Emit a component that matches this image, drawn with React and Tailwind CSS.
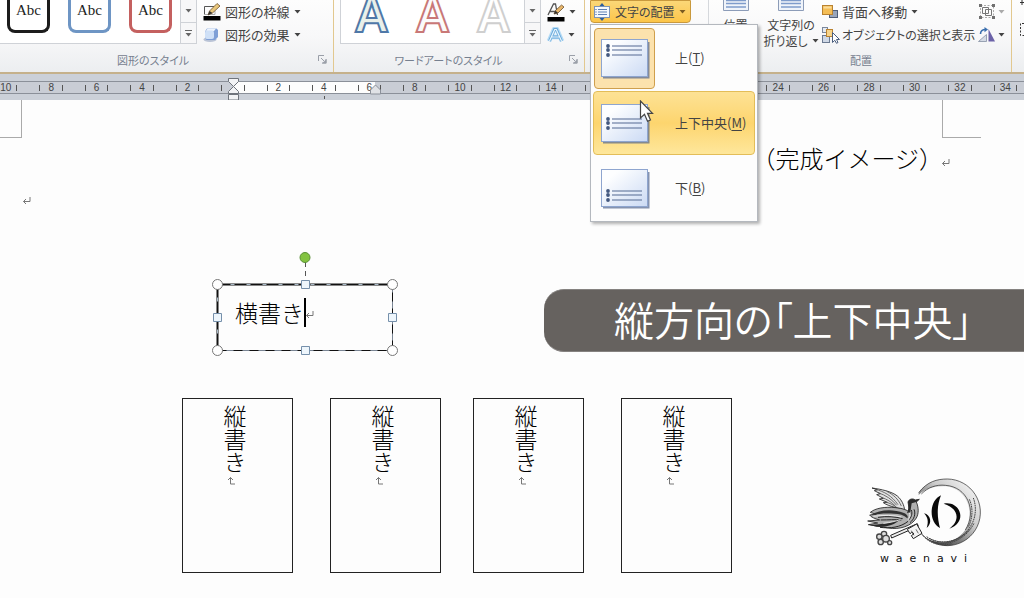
import { useState } from "react";
import clsx from "clsx";

const shapeStyles = [
  { name: "black", border: "border-[#1c1c1c]" },
  { name: "blue", border: "border-[#6e95c4]" },
  { name: "red", border: "border-[#c4605f]" },
];

const wordArtStyles = [
  { name: "navy", className: "text-[#e9f0ea] [-webkit-text-stroke:2px_#4f78a8]" },
  { name: "red", className: "text-[#fbfbfb] [-webkit-text-stroke:2px_#c97877]" },
  { name: "gray", className: "text-white [-webkit-text-stroke:2px_#cfcfcf]" },
];

const rulerMarks = [
  10, 8, 6, 4, 2, 0, 2, 4, 6, 8, 10, 12, 14, 16, 18, 20, 22, 24, 26, 28, 30,
  32, 34,
];

const alignments = [
  { id: "top", label: "上", accessKey: "T", lineY: 7 },
  { id: "middle", label: "上下中央", accessKey: "M", lineY: 15 },
  { id: "bottom", label: "下", accessKey: "B", lineY: 22 },
];

function Caret({ className }) {
  return (
    <svg className={clsx("shrink-0", className)} width="7" height="4" viewBox="0 0 7 4">
      <path d="M0.5 0h6L3.5 3.6z" fill="currentColor" />
    </svg>
  );
}

function Launcher() {
  return (
    <button aria-label="詳細" className="text-[#9a9fa8]">
      <svg width="9" height="9" viewBox="0 0 9 9" fill="none" stroke="currentColor">
        <path d="M0.5 6V0.5H6M3 3l3 3M8 4v4H4" />
        <path d="M8.5 4v4.5H4z" fill="currentColor" stroke="none" />
      </svg>
    </button>
  );
}

function GalleryButtons() {
  return (
    <div className="flex w-4 flex-col border-l border-[#cfd2d7] text-[#666]">
      <button
        aria-label="次へ"
        className="flex h-[23px] items-center justify-center border-b border-[#cfd2d7] bg-[#f7f7f8]"
      >
        <Caret />
      </button>
      <button
        aria-label="その他"
        className="flex flex-1 flex-col items-center justify-center gap-0.5 bg-[#f7f7f8]"
      >
        <span className="h-px w-[7px] bg-[#666]" />
        <Caret />
      </button>
    </div>
  );
}

function OutlineIcon() {
  return (
    <svg width="18" height="18" viewBox="0 0 18 18">
      <path d="M1.500 11.500v-8H11" fill="none" stroke="#555" />
      <path d="M1.500 11.500H12V8" fill="none" stroke="#aaa" />
      <path d="M5 12l1.500-4L14 0.500l3 2.500-7.500 7z" fill="#e8c67a" stroke="#6b4f2c" strokeWidth="0.8" />
      <path d="M5 12l1.500-4 3 2z" fill="#333" />
      <path d="M0.500 13h17v4.500h-17z" fill="#000" />
    </svg>
  );
}

function EffectsIcon() {
  return (
    <svg width="18" height="16" viewBox="0 0 18 16">
      <ellipse cx="7" cy="12.500" rx="6.500" ry="2.500" fill="#b9c3d6" />
      <path d="M4 1.500h9.500L15 3v7l-3 3H3.500L2 11V4.500z" fill="#7f9fd6" />
      <path d="M4.500 1.500H13L11 4H3z" fill="#eef4fd" />
      <rect x="2" y="3.500" width="9" height="8.500" rx="2" fill="#cfe0f7" />
    </svg>
  );
}

function WordArtOutlineIcon() {
  return (
    <svg width="18" height="20" viewBox="0 0 18 20">
      <path d="M1 13L6.500 2h2l2 11M3 9.500h6" fill="none" stroke="#555" strokeWidth="1.300" />
      <path d="M7 12l1.500-3.500L14.500 3l2.500 2-6 6z" fill="#e8b66a" stroke="#6b4f2c" strokeWidth="0.800" />
      <path d="M7 12l1.500-3.500 2.500 2.500z" fill="#333" />
      <path d="M0.500 15h17v4.500h-17z" fill="#000" />
    </svg>
  );
}

function WordArtEffectIcon() {
  return (
    <svg width="17" height="16" viewBox="0 0 17 16">
      <path d="M2 14L7.200 2h2.600L15 14M4.500 10h8" fill="none" stroke="#b5dbf5" strokeWidth="4.500" strokeLinejoin="round" />
      <path d="M2.500 14L7.500 2.500h2L14.500 14M5 10h7" fill="none" stroke="#6aa8da" strokeWidth="2.800" />
      <path d="M2.500 14L7.700 2.500h1.600L14.500 14M4.500 10h8" fill="none" stroke="#eaf6fd" strokeWidth="1.200" />
    </svg>
  );
}

function AlignTextIcon() {
  return (
    <svg width="18" height="18" viewBox="0 0 18 18">
      <rect x="1.500" y="3.500" width="15" height="11" fill="#f6f9fd" stroke="#7d93b5" />
      <path d="M5 6.500h9M5 9h9M5 11.500h9" stroke="#5f80b4" />
      <path d="M2.500 6.500h1M2.500 9h1M2.500 11.500h1" stroke="#2a4e8a" />
      <path d="M9 0l2.500 3h-5zM9 18l2.500-3h-5z" fill="#2c5d9c" />
    </svg>
  );
}

function PageIcon() {
  return (
    <svg width="28" height="11" viewBox="0 0 28 11">
      <path d="M1.500 0v10.500h25V0" fill="#f0f4fa" stroke="#8c9cb8" />
      <path d="M4 0.500h20M4 3.500h20M4 7h20" stroke="#7f9ccb" strokeWidth="1.300" />
    </svg>
  );
}

function SendBackIcon() {
  return (
    <svg width="16" height="15" viewBox="0 0 16 15">
      <rect x="7.500" y="6.500" width="8" height="7" fill="#98a5ba" stroke="#4f5d78" />
      <rect x="0.500" y="1.500" width="10" height="9" fill="#f4bd55" stroke="#b98230" />
      <path d="M1.500 2.500h8v2h-8z" fill="#fbdc9b" />
    </svg>
  );
}

function SelectionIcon() {
  return (
    <svg width="18" height="17" viewBox="0 0 18 17" strokeWidth="1">
      <rect x="0.500" y="0.500" width="5" height="5" fill="#e6ebf2" stroke="#7a879c" />
      <rect x="0.500" y="8.500" width="7" height="7" fill="#cfd8e6" stroke="#6b7a92" />
      <rect x="4.500" y="2.500" width="6" height="7" fill="#f7d48a" stroke="#b98230" />
      <path d="M10.500 5.500v10l2.300-2.200 1.700 3 1.500-.8-1.500-3h3z" fill="#fff" stroke="#4a5d7e" />
    </svg>
  );
}

function GroupIcon() {
  return (
    <svg width="18" height="17" viewBox="0 0 18 17" fill="none" stroke="#777">
      <path d="M2.500 2.500h13v12h-13z" strokeDasharray="2 1.500" stroke="#aaa" />
      <path d="M4.500 4.500h6v6h-6zM7.500 6.500h6v6h-6z" />
      <path d="M1 1h3v3H1zM14 1h3v3h-3zM1 13h3v3H1zM14 13h3v3h-3z" fill="#707070" stroke="none" />
    </svg>
  );
}

function RotateIcon() {
  return (
    <svg width="18" height="16" viewBox="0 0 18 16">
      <path d="M0.500 14.500h8v-7z" fill="#d5dbe5" stroke="#848fa3" strokeWidth="0.800" />
      <path d="M10.500 14.500V2l6.500 12.500z" fill="#6b62a8" />
      <path d="M2.500 7c0-3 2-4.500 5-4.500" fill="none" stroke="#3a6fae" strokeWidth="1.600" />
      <path d="M6.500 0l3.500 2.500-3.500 2.700z" fill="#3a6fae" />
    </svg>
  );
}

function AlignmentThumb({ lineY }) {
  return (
    <svg width="50" height="41" viewBox="0 0 50 41">
      <defs>
        <linearGradient id={`thumb${lineY}`} x1="0" y1="0" x2="1" y2="1">
          <stop offset="0.2" stopColor="#fdfeff" />
          <stop offset="1" stopColor="#cbdaf4" />
        </linearGradient>
      </defs>
      <path d="M3 39.500h45.500V4" fill="none" stroke="#51658f" strokeWidth="2" opacity="0.7" />
      <rect x="1.500" y="1.500" width="46" height="37" fill={`url(#thumb${lineY})`} stroke="#8ea5cf" />
      {[0, 4, 9].map((offset) => (
        <g key={offset}>
          <circle cx="8" cy={lineY + offset + 1} r="1.900" fill="#43587f" />
          <path d={`M12 ${lineY + offset + 1}h30`} stroke="#6c7fa3" strokeWidth="1.200" />
        </g>
      ))}
    </svg>
  );
}

function ReturnMark({ className }) {
  return (
    <svg className={clsx("shrink-0", className)} width="9" height="9" viewBox="0 0 9 9" fill="none" stroke="#777">
      <path d="M8 1v4.500H1.500M4 3L1.500 5.500 4 8" />
    </svg>
  );
}

function RibbonLabel({ children, launcher }) {
  return (
    <div className="flex h-[26px] items-center pr-1.5 pl-2 text-[11px] text-[#76808f]">
      <span className={clsx("flex-1 text-center", launcher && "pr-5")}>{children}</span>
      {launcher && <Launcher />}
    </div>
  );
}

function RibbonGroup({ className, label, launcher, children }) {
  return (
    <section className={clsx("flex shrink-0 flex-col", className)}>
      <div className="flex h-12 items-start">{children}</div>
      <RibbonLabel launcher={launcher}>{label}</RibbonLabel>
    </section>
  );
}

function AlignMenu({ selected, onSelect }) {
  return (
    <div className="absolute top-6 left-0 z-10 flex w-[168px] flex-col gap-px border border-[#b4b8be] bg-[#fdfdfd] px-0.5 pt-px pb-px text-[#444] shadow-[2px_2px_3px_rgba(0,0,0,0.3)]">
      {alignments.map((item) => (
        <button
          key={item.id}
          onClick={() => onSelect(item.id)}
          className={clsx(
            "flex h-16 items-center gap-5 rounded-sm border",
            item.id === "middle"
              ? "border-[#e3bd58] bg-linear-to-b from-[#fde295] via-[#fdd56e] to-[#fee79b]"
              : "border-transparent"
          )}
        >
          <span
            className={clsx(
              "flex h-[61px] w-[61px] items-center justify-center rounded-sm border",
              item.id === selected
                ? "border-[#cf9f4d] bg-[#fce2ad]"
                : "border-transparent"
            )}
          >
            <AlignmentThumb lineY={item.lineY} />
          </span>
          <span>
            {item.label}(<u className="underline-offset-2">{item.accessKey}</u>)
          </span>
        </button>
      ))}
      <svg className="absolute top-[75px] left-12" width="15" height="23" viewBox="0 0 15 23">
        <path
          d="M1.500 1v17l4-3.700 3 7 3-1.300-3-6.700h5z"
          fill="#fff"
          stroke="#444"
          strokeWidth="1.200"
        />
      </svg>
    </div>
  );
}

function Ribbon() {
  const [selected, setSelected] = useState("top");
  const [open, setOpen] = useState(true);

  return (
    <header className="flex h-[74px] border-b-2 border-[#c5b18b] bg-linear-to-b from-[#fdfdfd] via-[#f8f8f9] to-[#eceef0] text-[13px] leading-4 text-[#444]">
      <RibbonGroup className="w-[334px] border-r border-[#e2c88f]" label="図形のスタイル" launcher>
        <div className="flex h-11 border-r border-b border-[#cfd2d7] bg-white">
          <div className="flex gap-[18px] pr-2 pl-[7px]">
            {shapeStyles.map((style) => (
              <button
                key={style.name}
                className={clsx(
                  "h-[33px] w-[43px] rounded-b-lg border-3 border-t-0 bg-white pb-2.5 font-['Liberation_Serif','Noto_Sans_CJK_JP',serif] text-[15px] text-[#222]",
                  style.border
                )}
              >
                Abc
              </button>
            ))}
          </div>
          <GalleryButtons />
        </div>
        <div className="flex flex-col pl-1.5">
          <button className="flex h-[23px] items-center gap-1">
            <OutlineIcon />
            <span>図形の枠線</span>
            <Caret />
          </button>
          <button className="flex h-6 items-center gap-1">
            <EffectsIcon />
            <span>図形の効果</span>
            <Caret />
          </button>
        </div>
      </RibbonGroup>

      <RibbonGroup className="w-[251px] border-r border-[#e2c88f] pl-1.5" label="ワードアートのスタイル" launcher>
        <div className="flex h-11 border-r border-b border-l border-[#cfd2d7] bg-white">
          <div className="flex gap-6 pr-3 pl-3">
            {wordArtStyles.map((style) => (
              <button
                key={style.name}
                className={clsx(
                  "h-8 w-[37px] font-['Liberation_Sans','Noto_Sans_CJK_JP',sans-serif] text-5xl leading-8 font-bold",
                  style.className
                )}
              >
                A
              </button>
            ))}
          </div>
          <GalleryButtons />
        </div>
        <div className="flex flex-col pl-1.5">
          <button aria-label="文字の輪郭" className="flex h-[23px] items-center gap-1">
            <WordArtOutlineIcon />
            <Caret />
          </button>
          <button aria-label="文字の効果" className="flex h-6 items-center gap-1">
            <WordArtEffectIcon />
            <Caret />
          </button>
        </div>
      </RibbonGroup>

      <section className="w-[124px] shrink-0 border-r border-[#d5d8dc] pl-[5px]">
        <div className="relative">
          <button
            onClick={() => setOpen(!open)}
            className="flex h-[23px] items-center gap-1 rounded-b-sm border border-[#c9993d] bg-linear-to-b from-[#fbd777] to-[#fcc548] px-0.5 pr-1"
          >
            <AlignTextIcon />
            <span className="text-xs">文字の配置</span>
            <Caret className="text-[#7a5a20]" />
          </button>
          {open && <AlignMenu selected={selected} onSelect={setSelected} />}
        </div>
      </section>

      <RibbonGroup className="w-[303px] border-r border-[#e2c88f]" label="配置">
        <button className="flex w-[53px] flex-col items-center gap-1.5 text-xs">
          <PageIcon />
          <span>位置</span>
        </button>
        <button className="flex w-[58px] flex-col items-center gap-1.5 text-xs whitespace-nowrap">
          <PageIcon />
          <span className="flex flex-col">
            <span>文字列の</span>
            <span className="flex items-center gap-1">
              折り返し
              <Caret />
            </span>
          </span>
        </button>
        <div className="flex flex-1 flex-col pl-0.5">
          <button className="flex h-[23px] items-center gap-1">
            <SendBackIcon />
            <span>背面へ移動</span>
            <Caret />
          </button>
          <button className="flex h-6 items-center gap-0.5">
            <SelectionIcon />
            <span className="text-xs whitespace-nowrap">オブジェクトの選択と表示</span>
          </button>
        </div>
        <div className="flex flex-col pr-1.5">
          <button aria-label="グループ化" className="flex h-[23px] items-center gap-0.5 text-[#aaa]">
            <GroupIcon />
            <Caret />
          </button>
          <button aria-label="回転" className="flex h-6 items-center gap-0.5">
            <RotateIcon />
            <Caret />
          </button>
        </div>
      </RibbonGroup>
      <div className="flex flex-1 flex-col items-end overflow-hidden">
        <svg width="5" height="40" viewBox="0 0 5 40" fill="none" stroke="#333">
          <path d="M1 2.500h4M3 0v5" />
          <path d="M5 23.500H1.500v12H5" strokeDasharray="2 1.500" />
        </svg>
      </div>
    </header>
  );
}

function Ruler() {
  return (
    <div className="overflow-hidden bg-[#cbd0d8] pt-[7px] pb-1.5">
      <div className="relative h-[13px] border-y border-[#8b9099] bg-[linear-gradient(to_right,#c9cdd5_234px,#fdfdfd_234px,#fdfdfd_375px,#c9cdd5_375px)]">
        <div className="-mr-1 -ml-[17px] flex">
          {rulerMarks.map((mark, i) => (
            <div
              key={i}
              className="flex h-[11px] flex-1 items-center justify-between px-[11px] font-['Liberation_Sans','Noto_Sans_CJK_JP',sans-serif] text-[10px] leading-3 text-[#444]"
            >
              <span className="h-1.5 w-px bg-[#555]" />
              <span>{mark !== 0 && mark}</span>
              <span className="h-1.5 w-px bg-[#555]" />
            </div>
          ))}
        </div>
        <svg className="absolute -top-1 left-[228px]" width="11" height="23" viewBox="0 0 11 23" fill="#f2f3f5" stroke="#6f747c">
          <path d="M0.500 0.500h10v3l-5 5-5-5z" />
          <path d="M5.500 8.500l5 5v2h-10v-2z" />
          <path d="M0.500 16.500h10v5.500h-10z" />
        </svg>
        <svg className="absolute top-0.5 left-[370px]" width="11" height="11" viewBox="0 0 11 11" fill="#e0e2e6" stroke="#8b9099">
          <path d="M5.500 1l5 5v4h-10V6z" />
        </svg>
        <span className="absolute top-[14px] left-[324px] h-[3px] w-px bg-[#555]" />
      </div>
    </div>
  );
}

function SelectedTextBox() {
  return (
    <div className="relative ml-[217px] w-44">
      <svg className="w-full overflow-visible" height="67" viewBox="0 0 176 67" fill="none">
        <path d="M0.500 0.500h175M0.500 0.500v66" stroke="#111" strokeWidth="2" />
        <path d="M0.500 66.500h175V0.500" stroke="#7a8594" />
        <path d="M0.500 66.500h175V0.500" stroke="#111" strokeDasharray="9 7" />
        <path d="M0.500 0.500h175M0.500 0.500v66" stroke="#a9bac8" strokeDasharray="4 12" strokeDashoffset="3" />
        <path d="M88.500-22v20" stroke="#555" strokeDasharray="5 4" />
        <circle cx="88" cy="-26.500" r="5" fill="#83c341" stroke="#5a8f35" />
        <g fill="#fff" stroke="#777">
          <circle cx="0.500" cy="0.500" r="5" />
          <circle cx="175.500" cy="0.500" r="5" />
          <circle cx="0.500" cy="66.500" r="5" />
          <circle cx="175.500" cy="66.500" r="5" />
        </g>
        <g fill="#eef6fc" stroke="#7690ab">
          <path d="M84.500-3.500h8v8h-8zM84.500 62.500h8v8h-8zM-3.500 29.500h8v8h-8zM171.500 29.500h8v8h-8z" />
        </g>
      </svg>
      <p className="absolute top-2.5 left-[18px] flex items-center text-[23px] leading-9 font-light text-black [font-feature-settings:normal]">
        横書き
        <span className="h-[29px] w-0.5 bg-black" />
        <ReturnMark className="mt-1 -ml-px" />
      </p>
    </div>
  );
}

function VerticalBox() {
  return (
    <div className="flex h-[175px] w-[111px] justify-center border border-[#222] pt-1.5 pr-1.5">
      <p className="flex flex-col items-center text-[23px] leading-[23px] font-light text-black [font-feature-settings:normal]">
        <span className="[writing-mode:vertical-rl]">縦書き</span>
        <ReturnMark className="mt-0.5 mr-1.5 rotate-90" />
      </p>
    </div>
  );
}

function Logo() {
  return (
    <div className="absolute right-[43px] bottom-[31px] w-[115px] text-[#111]">
      <svg className="w-full" viewBox="48 36 345 208" fill="none" stroke="#222">
        <defs>
          <linearGradient id="moon" x1="0" y1="1" x2="1" y2="0">
            <stop offset="0" stopColor="#1c1c1c" />
            <stop offset="0.350" stopColor="#777" />
            <stop offset="0.600" stopColor="#ccc" />
            <stop offset="1" stopColor="#fff" />
          </linearGradient>
        </defs>
        {/* moon */}
        <path d="M206 80C232 46 262 39 292 39a100 100 0 1 1-76 166c32 35 100 33 130-14 34-58-2-130-66-130-32 0-55 8-74 26z" fill="url(#moon)" stroke="none" />
        <path d="M206 80C232 46 262 39 292 39a100 100 0 1 1-76 166" strokeWidth="2" />
        <path d="M214 84c20-20 45-29 72-26 66 4 96 76 60 134" strokeWidth="2" />
        <path d="M230 212c40 30 100 14 128-22M240 218c44 24 98 4 122-38M250 228c50 14 98-10 122-56M358 100c12 25 10 60-4 84M370 96c10 26 8 60-8 84M216 205c22 30 60 36 90 28" strokeWidth="3" strokeDasharray="5 2" stroke="#444" />
        {/* emblem */}
        <g fill="#090909" stroke="none">
          <path d="M222 142c20 4 26 30 8 44 6-18 4-32-8-44z" />
          <path d="M273 88c-38 18-36 82-3 98-8-30-11-64 3-98z" />
          <path d="M281 113c50-10 74 56 17 75 34-24 28-62-17-75z" />
        </g>
        {/* far wing */}
        <path d="M66 66c28 4 58 10 76 24 14 12 20 28 22 42l-30-8c-14-4-26-8-34-14l12-1-24-10 12-2-20-11 11-3-18-9 9-3z" fill="#e2e2e2" strokeWidth="2.500" />
        <path d="M76 70c26 6 50 20 68 46M84 80c24 8 42 20 56 38M94 94c18 6 30 14 42 26M104 108c14 2 24 8 36 16M110 76c20 10 34 22 44 44" strokeWidth="2.500" stroke="#555" />
        {/* near wing, body and tail */}
        <path d="M174 108c3-9 14-12 22-6l12-2-9 8c7 16 8 34 0 48-14 24-50 36-84 30l-60-10 28-5-30-6 36-3c-14-4-26-8-30-15l20-2c-8-3-14-4-18-6 14-12 44-18 76-14 20 2 34 6 42 14z" fill="#b0b0b0" strokeWidth="2.500" />
        <path d="M62 147c26-16 64-20 100-6 10 4 14 12 10 16-10-10-24-14-40-14-24-2-46 0-70 4z" fill="#333" stroke="none" />
        <path d="M56 176c34 0 66-4 96-18-18 20-46 26-72 24zM174 108c3-9 14-12 22-6l12-2-9 8-14 4-4 26-10 4c4-10 6-22 3-34z" fill="#2b2b2b" stroke="none" />
        <path d="M84 154c28-4 52-2 74 4M92 162c24 0 44-2 62 0M90 184c30 4 62 0 84-18M192 130c6 14 0 30-12 40M184 132c4 12 0 22-8 30" strokeWidth="3" />
        <path d="M70 151c30-4 62-4 84 2M100 172c20-2 38-6 52-12M178 140c4 8 0 16-4 22" strokeWidth="2.500" stroke="#f7f7f7" />
        {/* key */}
        <path d="M122 208l80-35 3 8-80 35z" fill="#eee" strokeWidth="3" />
        <path d="M172 190l28-16 16 28-26 16-6-9 8-6-7-4-5 4z" fill="#f4f4f4" strokeWidth="3" />
        <path d="M184 194l8 14M198 190l7 12" strokeWidth="2" />
        <g strokeWidth="4" stroke="#444" fill="#ddd">
          <circle cx="102" cy="204" r="8" />
          <circle cx="88" cy="212" r="8" />
          <circle cx="92" cy="228" r="8" />
          <circle cx="108" cy="218" r="10" />
          <circle cx="119" cy="230" r="6" />
        </g>
      </svg>
      <div className="mt-1 flex justify-between px-3.5 font-['DejaVu_Sans','Noto_Sans_CJK_JP',sans-serif] text-[11px] leading-4">
        {"waenavi".split("").map((letter, i) => (
          <span key={i}>{letter}</span>
        ))}
      </div>
    </div>
  );
}

function Document() {
  return (
    <main className="relative bg-[#fdfdfd] pb-[25px]">
      <div className="flex justify-between pr-[43px]">
        <div className="h-[38px] w-[22px] border-r border-b border-[#aaa]" />
        <div className="h-[38px] w-[39px] border-b border-l border-[#aaa]" />
      </div>
      <div className="flex items-center justify-end pt-0.5 pr-[74px]">
        <p className="flex items-center text-2xl leading-9 font-light text-black [font-feature-settings:normal]">
          （完成イメージ）
          <ReturnMark className="-ml-0.5 mt-2" />
        </p>
      </div>
      <div className="flex h-12 items-center pl-[22px]">
        <ReturnMark />
      </div>
      <div className="pt-[60px]">
        <SelectedTextBox />
      </div>
      <div className="flex gap-8 pt-[47px] pl-[182px]">
        <div className="flex gap-[37px]">
          <VerticalBox />
          <VerticalBox />
        </div>
        <div className="flex gap-[37px]">
          <VerticalBox />
          <VerticalBox />
        </div>
      </div>
      <h1 className="absolute top-[189px] right-0 flex h-[63px] w-[480px] items-center rounded-l-[20px] border-y border-[#858280] bg-[#66625f] pb-1 pl-[70px] text-[40px] font-[350] whitespace-nowrap text-white">
        縦方向の「上下中央」
      </h1>
      <Logo />
    </main>
  );
}

function App() {
  return (
    <div
      lang="ja"
      className="min-h-screen overflow-hidden bg-[#fdfdfd] font-['Noto_Sans_CJK_JP',sans-serif] [font-feature-settings:'palt']"
    >
      <Ribbon />
      <Ruler />
      <Document />
    </div>
  );
}

export default App;
